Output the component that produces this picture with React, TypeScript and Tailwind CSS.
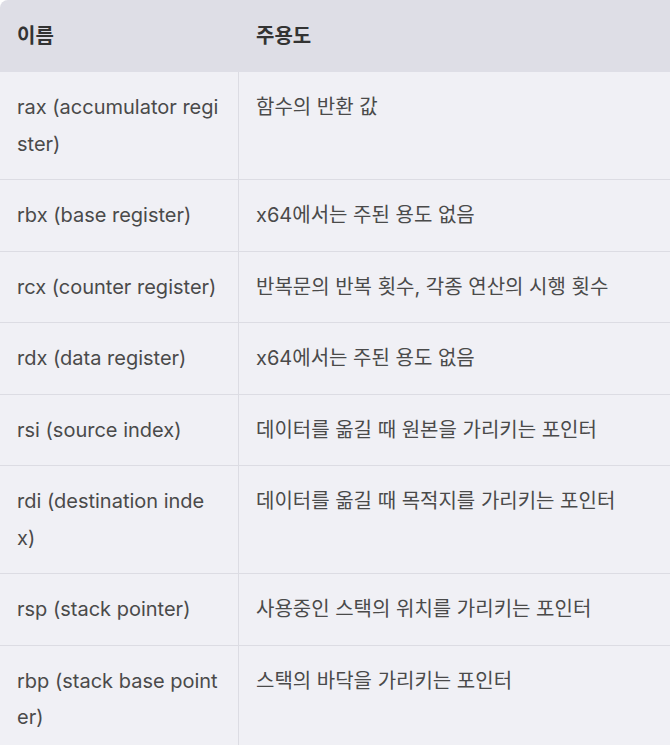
const rows: [string, string][] = [
  ["rax (accumulator register)", "함수의 반환 값"],
  ["rbx (base register)", "x64에서는 주된 용도 없음"],
  ["rcx (counter register)", "반복문의 반복 횟수, 각종 연산의 시행 횟수"],
  ["rdx (data register)", "x64에서는 주된 용도 없음"],
  ["rsi (source index)", "데이터를 옮길 때 원본을 가리키는 포인터"],
  ["rdi (destination index)", "데이터를 옮길 때 목적지를 가리키는 포인터"],
  ["rsp (stack pointer)", "사용중인 스택의 위치를 가리키는 포인터"],
  ["rbp (stack base pointer)", "스택의 바닥을 가리키는 포인터"],
];

export default function App() {
  return (
    <div className="w-[670px] bg-white font-['Inter','Noto_Sans_CJK_KR',sans-serif] text-[20px]">
      <table className="w-full table-fixed border-separate border-spacing-0">
        <thead>
          <tr className="text-left text-[#333333]">
            <th className="w-[239px] rounded-tl-lg bg-[#dedee6] px-[17px] py-[18px] font-bold leading-9">이름</th>
            <th className="bg-[#dedee6] px-[17px] py-[18px] font-bold leading-9">주용도</th>
          </tr>
        </thead>
        <tbody className="text-[#4a4a4a]">
          {rows.map(([name, use]) => (
            <tr key={name}>
              <td className="break-all border-b border-r border-[#dcdce3] bg-[#f0f0f5] px-[17px] py-[17px] align-top leading-[36.5px]">
                {name}
              </td>
              <td className="border-b border-[#dcdce3] bg-[#f0f0f5] px-[17px] py-[17px] align-top leading-[36.5px]">
                {use}
              </td>
            </tr>
          ))}
        </tbody>
      </table>
    </div>
  );
}
